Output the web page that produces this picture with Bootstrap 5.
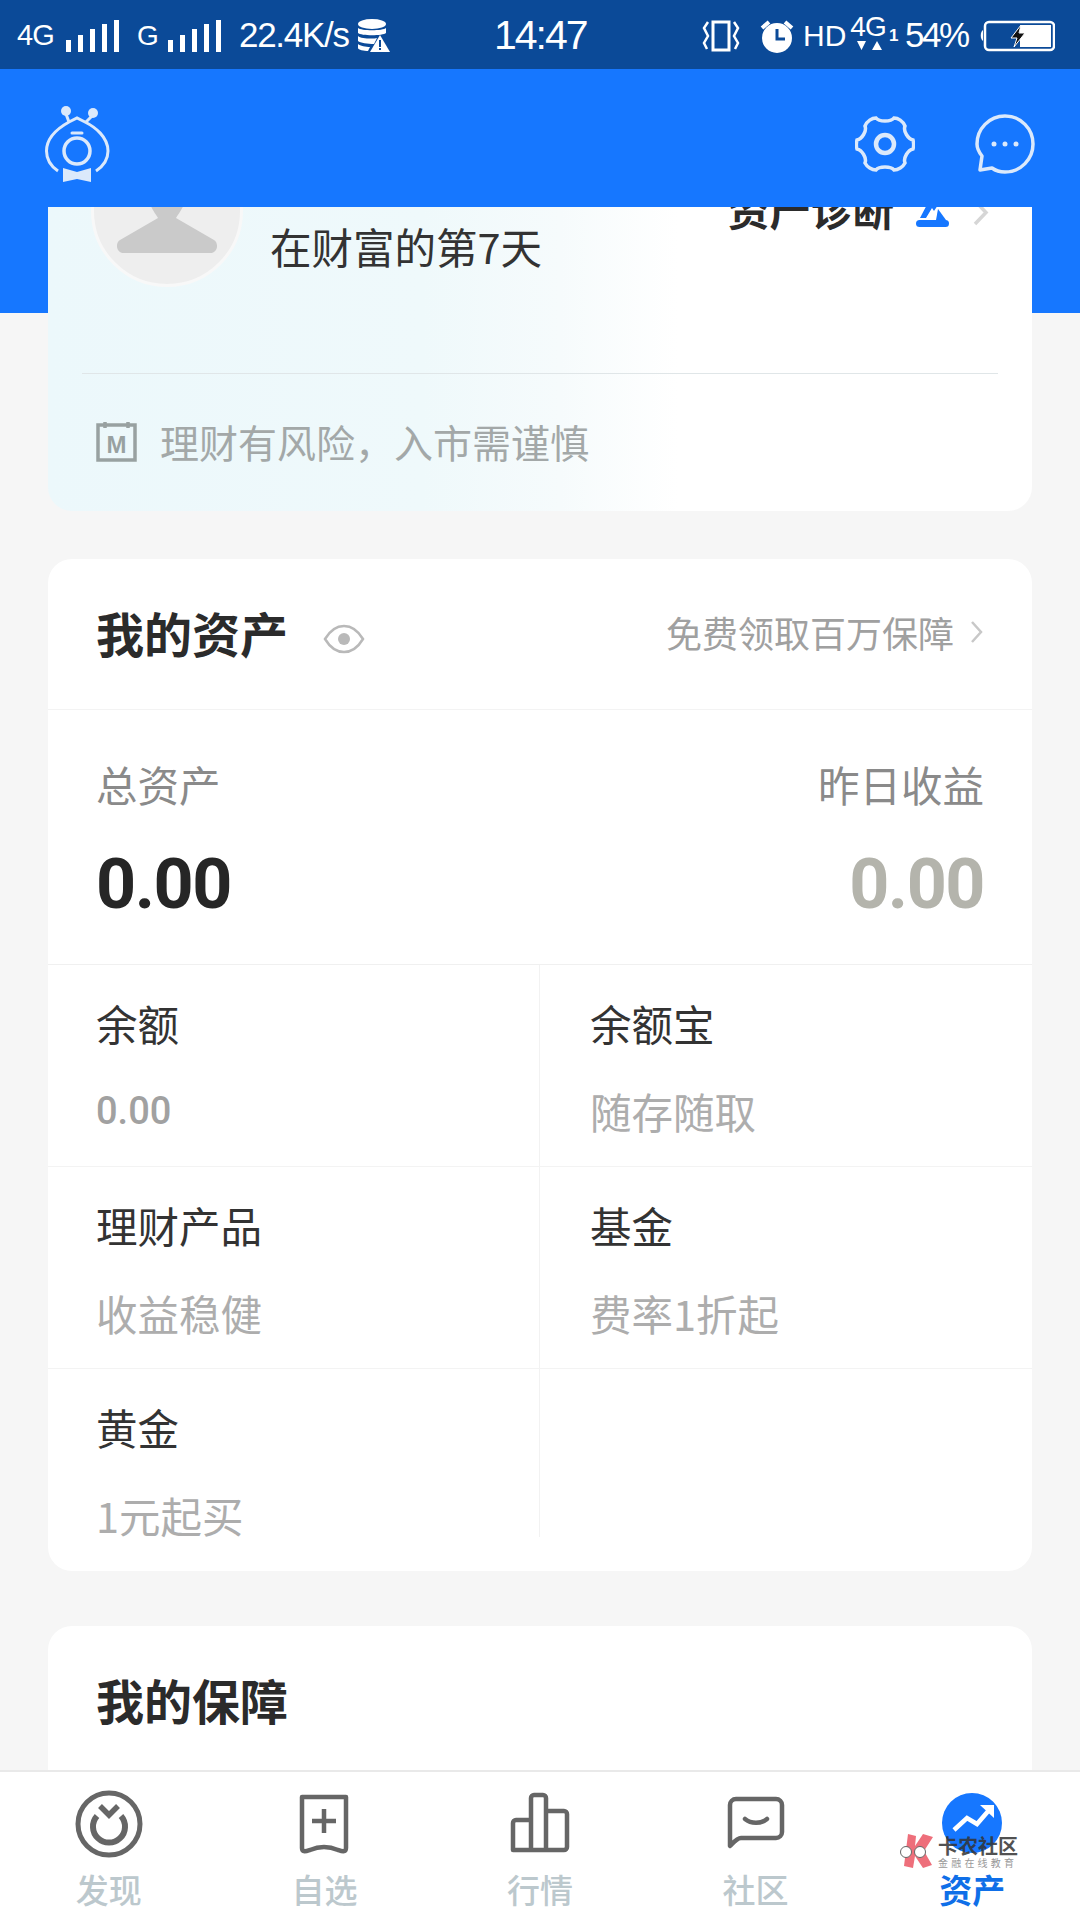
<!DOCTYPE html>
<html lang="zh">
<head>
  <meta charset="UTF-8">
  <title>资产</title>
  <meta name="viewport" content="width=device-width, initial-scale=1">
  <link href="https://cdn.jsdelivr.net/npm/bootstrap@5.3.0/dist/css/bootstrap.min.css" rel="stylesheet">
  <style>
    body {
      margin: 0;
      background: #f6f6f6;
      font-family: "Noto Sans CJK SC", "Liberation Sans", sans-serif;
    }

    .app-screen { width: 1080px; height: 1920px; overflow: hidden; }

    /* Status bar */
    .status-bar {
      height: 69px;
      padding: 2px 0 0 17px;
      background: #0b4a98;
      color: #fff;
      font-family: "Liberation Sans", sans-serif;
      white-space: nowrap;
    }
    .status-bar > * { flex-shrink: 0; }
    .sb-4g { width: 38px; font-size: 29px; letter-spacing: -1px; }
    .sb-bars1 { margin-left: 11px; }
    .sb-g { width: 20px; margin-left: 17px; font-size: 28px; }
    .sb-bars2 { margin-left: 11px; }
    .sb-speed { width: 110px; margin-left: 17px; font-size: 35px; letter-spacing: -1.3px; }
    .sb-db { margin-left: 9px; }
    .sb-time { width: 92px; margin-left: 104px; font-size: 41px; letter-spacing: -2px; }
    .sb-vib { margin-left: 116px; }
    .sb-alarm { margin-left: 20px; }
    .sb-hd { width: 42px; margin-left: 9px; font-size: 30px; }
    .sb-net { width: 36px; margin-left: 5px; margin-top: -8px; font-size: 28px; line-height: 26px; letter-spacing: -1px; }
    .sb-one { width: 7px; margin-left: 3px; font-size: 17px; font-weight: 700; }
    .sb-pct { width: 64px; margin-left: 9px; font-size: 35px; letter-spacing: -2.5px; }
    .sb-bat { margin-left: 10px; }

    /* Header */
    .app-head { height: 138px; padding: 12px 45px 0 45px; background: #1677ff; flex-shrink: 0; z-index: 2; }
    .head-icons { gap: 60px; }

    /* Scrolled content */
    .scroll-area { flex: 1 1 auto; overflow: hidden; position: relative; min-height: 0; }
    .blue-band { position: absolute; top: 0; left: 0; right: 0; height: 106px; background: #1677ff; }
    .scroll-inner { position: relative; padding: 0 48px; margin-top: -100px; }

    .sheet { border-radius: 24px; border: 0; background: #fff; overflow: hidden; }

    .profile-sheet {
      height: 404px;
      background: linear-gradient(90deg, #ecf8fb 0%, #eff9fb 38%, #f6fbfc 52%, #fff 64%);
    }
    .profile-top { height: 267px; margin: 0 34px; border-bottom: 1px solid #e0e6e8; }
    .avatar-ring {
      width: 152px; height: 152px;
      margin-left: 9px;
      margin-top: 28px;
      border-radius: 50%;
      background: #eeeeee;
      border: 3px solid #f8f8f8;
      flex-shrink: 0;
    }
    .profile-days { font-size: 41.5px; color: #333; margin-left: 27px; margin-top: 109px; line-height: 60px; }
    .diagnose { font-size: 41.5px; font-weight: 700; color: #2b2b2b; line-height: 50px; margin-top: 76px; margin-right: 8px; }
    .diag-ico { margin-left: 22px; margin-top: 12px; }
    .diag-arrow { margin-left: 24px; margin-top: 16px; }
    .risk-row { height: 137px; padding: 0 48px 3px; font-size: 39px; color: #a3a8a8; gap: 23px; }

    .assets-sheet { margin-top: 48px; height: 1012px; }
    .sheet-head { height: 151px; padding: 0 48px 5px; border-bottom: 1px solid #f3f3f3; }
    .sheet-title { font-size: 48px; font-weight: 700; color: #2b2b2b; line-height: 60px; }
    .eye-ico { margin-left: 35px; margin-top: 14px; }
    .head-link { font-size: 36px; color: #a0a0a0; }

    .total-row { height: 255px; padding: 46px 48px 0; border-bottom: 1px solid #f0f0f0; }
    .total-label { font-size: 41.5px; color: #8a8a8a; line-height: 56px; }
    .total-num { font-family: Roboto, sans-serif; font-weight: 700; font-size: 70px; letter-spacing: -1.5px; line-height: 80px; margin-top: 32px; color: #262626; }
    .total-num-muted { color: #b4b4ac; }

    .fund-row { height: 202px; border-bottom: 1px solid #f3f3f3; }
    .fund-row:last-child { border-bottom: 0; height: 201px; }
    .fund-cell { width: 50%; padding: 30px 48px 0; }
    .fund-cell:first-child { border-right: 1px solid #f2f2f2; width: 492px; }
    .fund-cell + .fund-cell { padding-left: 50px; }
    .fund-row:last-child .fund-cell:first-child { height: 168px; }
    .fund-name { font-size: 41.5px; color: #333; line-height: 56px; }
    .fund-sub { font-size: 41.5px; color: #adadad; line-height: 56px; margin-top: 32px; }
    .fund-num { font-family: Roboto, sans-serif; font-weight: 500; font-size: 38px; color: #a1a1a1; }

    .cover-sheet { margin-top: 55px; height: 300px; padding: 43px 48px; }

    /* Tab bar */
    .tab-bar { height: 150px; flex-shrink: 0; background: #fff; border-top: 2px solid #e9e9e9; position: relative; padding-left: 1px; }
    .tab-item { width: 216px; padding-top: 16px; }
    .tab-icon { height: 72px; }
    .tab-label { font-size: 33px; font-weight: 500; color: #bcc8cd; line-height: 46px; margin-top: 6px; }
    .tab-last { margin-left: 1px; }
    .tab-on { color: #0f6fe8; font-weight: 700; }

    /* Watermark over the last tab */
    .mark-over { position: absolute; left: 900px; top: 61px; width: 120px; height: 36px; }
    .mark-cn { position: absolute; left: 38px; top: 2px; font-size: 20px; line-height: 22px; font-weight: 700; color: #333; opacity: .85; white-space: nowrap; }
    .mark-sub { position: absolute; left: 38px; top: 24px; font-size: 10px; line-height: 12px; color: #999; white-space: nowrap; letter-spacing: 3.2px; }
  </style>
</head>
<body>
<div class="app-screen d-flex flex-column">

  <!-- Status bar -->
  <div class="status-bar d-flex align-items-center flex-shrink-0">
    <span class="sb-4g">4G</span>
    <svg class="sb-bars1" width="54" height="32" viewBox="0 0 54 32" fill="#fff"><rect x="0" y="20" width="5" height="12"/><rect x="12" y="15" width="5" height="17"/><rect x="24" y="9" width="5" height="23"/><rect x="36" y="4" width="5" height="28"/><rect x="48" y="0" width="5" height="32"/></svg>
    <span class="sb-g">G</span>
    <svg class="sb-bars2" width="54" height="32" viewBox="0 0 54 32" fill="#fff"><rect x="0" y="20" width="5" height="12"/><rect x="12" y="15" width="5" height="17"/><rect x="24" y="9" width="5" height="23"/><rect x="36" y="4" width="5" height="28"/><rect x="48" y="0" width="5" height="32"/></svg>
    <span class="sb-speed">22.4K/s</span>
    <svg class="sb-db" width="32" height="34" viewBox="0 0 32 34" fill="#fff"><ellipse cx="14" cy="5" rx="14" ry="5"/><path d="M0 9c3 3 25 3 28 0v5c-3 3-25 3-28 0zM0 17c3 3 16 3 19 2l-3 6c-6 0-14-1-16-3zM0 25c2 2 8 3 12 3l-2 4c-4 0-10-1-10-3z"/><path d="M22 16l10 17H12z"/><path d="M21 21h2v7h-2zM21 29h2v2h-2z" fill="#0b4a98"/></svg>
    <span class="sb-time">14:47</span>
    <svg class="sb-vib" width="38" height="32" viewBox="0 0 38 32" fill="none" stroke="#fff"><rect x="11" y="2" width="16" height="28" stroke-width="3"/><path d="M6 2L2 8l4 8-4 7 3 6M32 2l4 6-4 8 4 7-3 6" stroke-width="2.500"/></svg>
    <svg class="sb-alarm" width="34" height="34" viewBox="0 0 34 34"><circle cx="17" cy="19" r="15" fill="#fff"/><path d="M2 9l7-6M32 9l-7-6" stroke="#fff" stroke-width="4"/><path d="M17 10v10h8" fill="none" stroke="#0b4a98" stroke-width="3"/></svg>
    <span class="sb-hd">HD</span>
    <span class="sb-net d-inline-flex flex-column align-items-center">4G<svg class="d-block" width="32" height="10" viewBox="0 0 32 10" fill="#fff"><path d="M5 1h9L9.500 10zM20 10l5-9 5 9z"/></svg></span>
    <span class="sb-one">1</span>
    <span class="sb-pct">54%</span>
    <svg class="sb-bat" width="76" height="32" viewBox="0 0 76 32"><path d="M4 10C1 12 1 19 4 21z" fill="#fff"/><rect x="6" y="2" width="69" height="28" rx="4" fill="none" stroke="#fff" stroke-width="2.500"/><rect x="41" y="5" width="31" height="22" fill="#fff"/><path d="M42 5L32 18h6l-3 9 11-14h-6z" fill="#111" stroke="#fff" stroke-width="1"/></svg>
  </div>

  <!-- Header -->
  <div class="app-head d-flex align-items-center justify-content-between">
    <svg width="65" height="77" viewBox="0 0 65 77" fill="none" stroke="#dbe9fb" stroke-width="3">
      <circle cx="21" cy="5" r="5" fill="#dbe9fb" stroke="none"/><circle cx="48" cy="7" r="5" fill="#dbe9fb" stroke="none"/>
      <path d="M21 8l3 8M47 10l-6 6"/>
      <path d="M13 65C4 59 1.500 51 1.500 45 1.500 31 15 21 24 16l8-4 8 4c10 5 23 15 23 29 0 6-3 14-12 20"/>
      <circle cx="32" cy="45" r="13" stroke-width="3.500"/><path d="M27 27h10" stroke-linecap="round"/>
      <path d="M18 62l14 4 14-4v14l-14-3-14 3z" fill="#dbe9fb" stroke="none"/>
    </svg>
    <div class="head-icons d-flex align-items-center">
      <svg width="60" height="60" viewBox="0 0 60 60" fill="none" stroke="#dbe9fb" stroke-width="3.500"><path d="M21 4c3 4 15 4 18 0 4 0 9 3 11 8-2 5 3 13 8 14 1 4 1 6 0 9-5 1-10 9-8 14-2 4-7 7-11 7-3-4-15-4-18 0-4 0-9-3-11-7 2-5-3-13-8-14-1-3-1-5 0-9 5-1 10-9 8-14 2-5 7-8 11-8z"/><circle cx="30" cy="30" r="9" stroke-width="4.500"/></svg>
      <svg width="60" height="60" viewBox="0 0 60 60" fill="none" stroke="#dbe9fb" stroke-width="3.500"><path d="M5 56l2-14C3 37 2 34 2 30 2 15 14 2 30 2s28 13 28 28-12 28-28 28c-5 0-9-1-13-4z" stroke-linejoin="round"/><circle cx="19" cy="30" r="2.500" fill="#dbe9fb" stroke="none"/><circle cx="30" cy="30" r="2.500" fill="#dbe9fb" stroke="none"/><circle cx="41" cy="30" r="2.500" fill="#dbe9fb" stroke="none"/></svg>
    </div>
  </div>

  <!-- Content -->
  <div class="scroll-area">
    <div class="blue-band"></div>
    <div class="scroll-inner">

      <div class="card sheet profile-sheet">
        <div class="profile-top d-flex">
          <div class="avatar-ring d-flex justify-content-center">
            <svg width="102" height="146" viewBox="0 0 102 146" fill="#cacaca"><path d="M33 60h36c0 8-6 15-9 20l38 22c5 3 4 13-4 13H8c-8 0-9-10-4-13l38-22c-3-5-9-12-9-20z"/></svg>
          </div>
          <div class="profile-days">在财富的第7天</div>
          <div class="diagnose d-flex align-items-start ms-auto">
            <span>资产诊断</span>
            <svg class="diag-ico" width="33" height="33" viewBox="0 0 33 33" fill="#1677ff"><path d="M16 0l6 10-4 6-2-3-6 10H4z"/><rect x="0" y="25" width="33" height="7" rx="3.500"/><path d="M22 14l8 11H20z"/></svg>
            <svg class="diag-arrow" width="17" height="27" viewBox="0 0 17 27" fill="none" stroke="#d6d6d6" stroke-width="3.500"><path d="M2 2l11 11.500L2 25"/></svg>
          </div>
        </div>
        <div class="risk-row d-flex align-items-center">
          <svg width="41" height="41" viewBox="0 0 41 41" fill="none" stroke="#98a1a1" stroke-width="3.500"><rect x="2" y="4" width="37" height="35"/><path d="M9 1v6M32 1v6"/><text x="20.500" y="32" text-anchor="middle" font-family="Liberation Sans, sans-serif" font-weight="700" font-size="24" fill="#98a1a1" stroke="none">M</text></svg>
          <span>理财有风险，入市需谨慎</span>
        </div>
      </div>

      <div class="card sheet assets-sheet">
        <div class="sheet-head d-flex align-items-center">
          <span class="sheet-title">我的资产</span>
          <svg class="eye-ico" width="42" height="30" viewBox="0 0 42 30" fill="none" stroke="#b9b9b9" stroke-width="2.500"><path d="M2 15C8 5 14 2 21 2s13 3 19 13c-6 10-12 13-19 13S8 25 2 15z"/><circle cx="21" cy="15" r="6" fill="#b9b9b9" stroke="none"/></svg>
          <span class="head-link ms-auto">免费领取百万保障</span>
          <svg class="ms-3" width="14" height="24" viewBox="0 0 14 24" fill="none" stroke="#c8c8c8" stroke-width="2.500"><path d="M2 2l9 10L2 22"/></svg>
        </div>
        <div class="total-row d-flex justify-content-between">
          <div>
            <div class="total-label">总资产</div>
            <div class="total-num">0.00</div>
          </div>
          <div class="text-end">
            <div class="total-label">昨日收益</div>
            <div class="total-num total-num-muted">0.00</div>
          </div>
        </div>
        <div class="fund-row d-flex">
          <div class="fund-cell"><div class="fund-name">余额</div><div class="fund-sub fund-num">0.00</div></div>
          <div class="fund-cell"><div class="fund-name">余额宝</div><div class="fund-sub">随存随取</div></div>
        </div>
        <div class="fund-row d-flex">
          <div class="fund-cell"><div class="fund-name">理财产品</div><div class="fund-sub">收益稳健</div></div>
          <div class="fund-cell"><div class="fund-name">基金</div><div class="fund-sub">费率1折起</div></div>
        </div>
        <div class="fund-row d-flex">
          <div class="fund-cell"><div class="fund-name">黄金</div><div class="fund-sub">1元起买</div></div>
          <div class="fund-cell"></div>
        </div>
      </div>

      <div class="card sheet cover-sheet">
        <div class="sheet-title">我的保障</div>
      </div>
    </div>
  </div>

  <!-- Tab bar -->
  <div class="tab-bar d-flex">
    <div class="tab-item d-flex flex-column align-items-center">
      <svg class="tab-icon" width="70" height="72" viewBox="0 0 70 72" fill="none" stroke="#666" stroke-width="5"><circle cx="35" cy="36" r="31"/><path d="M23 28a16 16 0 1 0 24 0" stroke-width="6"/><path d="M26 18l9 9 9-9" stroke-width="5.500"/></svg>
      <div class="tab-label">发现</div>
    </div>
    <div class="tab-item d-flex flex-column align-items-center">
      <svg class="tab-icon" width="52" height="72" viewBox="0 0 52 72" fill="none" stroke="#666" stroke-width="4.500"><path d="M4 9h44v51c0 5-5 3-8 2-9-4-19-4-28 0-3 1-8 3-8-2z" stroke-linejoin="round"/><path d="M14 33h24M26 21v24"/></svg>
      <div class="tab-label">自选</div>
    </div>
    <div class="tab-item d-flex flex-column align-items-center">
      <svg class="tab-icon" width="60" height="72" viewBox="0 0 60 72" fill="none" stroke="#666" stroke-width="4.500"><path d="M3 62V35a3 3 0 0 1 3-3h15v30zM21 62V10a3 3 0 0 1 3-3h9a3 3 0 0 1 3 3v52zM36 62V23h18a3 3 0 0 1 3 3v33a3 3 0 0 1-3 3z" stroke-linejoin="round"/></svg>
      <div class="tab-label">行情</div>
    </div>
    <div class="tab-item d-flex flex-column align-items-center">
      <svg class="tab-icon" width="58" height="72" viewBox="0 0 58 72" fill="none" stroke="#666" stroke-width="4.500"><path d="M3 58V17a6 6 0 0 1 6-6h40a6 6 0 0 1 6 6v27a6 6 0 0 1-6 6H14c-4 0-8 5-11 8z" stroke-linejoin="round"/><path d="M18 31c6 5 16 5 22 0" stroke-linecap="round"/></svg>
      <div class="tab-label">社区</div>
    </div>
    <div class="tab-item tab-last d-flex flex-column align-items-center">
      <svg class="tab-icon" width="60" height="72" viewBox="0 0 60 72"><circle cx="30" cy="35" r="30" fill="#1677ff"/><path d="M12 42l13-12 10 6 13-15" fill="none" stroke="#fff" stroke-width="4.500"/><path d="M38 17h14v13z" fill="#fff"/></svg>
      <div class="tab-label tab-on">资产</div>
    </div>
    <div class="mark-over">
      <svg class="position-absolute top-0 start-0" width="36" height="36" viewBox="0 0 36 36"><path d="M8 1l8 2-1 10 8-12 10 3-9 14 8 14-9 3-8-12-2 12-9-2z" fill="#ee6f7b"/><circle cx="6" cy="19" r="5.500" fill="#fff" stroke="#666" stroke-width="1"/><circle cx="20" cy="19" r="5.500" fill="#fff" stroke="#666" stroke-width="1"/></svg>
      <span class="mark-cn">卡农社区</span>
      <span class="mark-sub">金融在线教育</span>
    </div>
  </div>
</div>
<script src="https://cdn.jsdelivr.net/npm/bootstrap@5.3.0/dist/js/bootstrap.bundle.min.js"></script>
</body>
</html>
